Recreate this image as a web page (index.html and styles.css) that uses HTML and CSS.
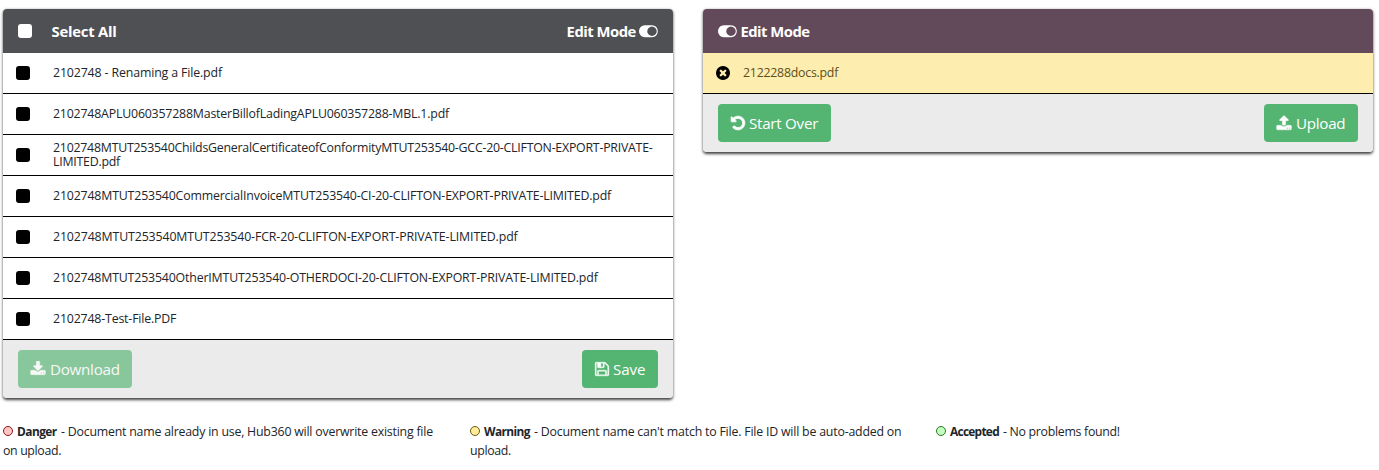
FILE: index.html
```
<!DOCTYPE html>
<html lang="en">
<head>
<meta charset="utf-8">
<title>Documents</title>
<link rel="stylesheet" href="styles.css">
</head>
<body>
<svg class="sprite" aria-hidden="true">
  <symbol id="toggle" viewBox="0 0 2048 1792"><path d="M0 896q0-130 51-248.500t136.500-204 204-136.500 248.500-51h768q130 0 248.500 51t204 136.500 136.500 204 51 248.500-51 248.500-136.500 204-204 136.500-248.500 51h-768q-130 0-248.500-51t-204-136.500-136.500-204-51-248.500zm1408 512q104 0 198.500-40.500t163.500-109.500 109.500-163.500 40.500-198.500-40.500-198.500-109.500-163.500-163.500-109.500-198.500-40.500-198.500 40.500-163.500 109.500-109.500 163.500-40.500 198.500 40.500 198.500 109.500 163.500 163.500 109.500 198.500 40.500z"/></symbol>
  <symbol id="download" viewBox="0 0 1792 1792"><path d="M1344 1344q0-26-19-45t-45-19-45 19-19 45 19 45 45 19 45-19 19-45zm256 0q0-26-19-45t-45-19-45 19-19 45 19 45 45 19 45-19 19-45zm128-224v320q0 40-28 68t-68 28h-1472q-40 0-68-28t-28-68v-320q0-40 28-68t68-28h465l135 136q58 56 136 56t136-56l136-136h464q40 0 68 28t28 68zm-325-569q17 41-14 70l-448 448q-18 19-45 19t-45-19l-448-448q-31-29-14-70 17-39 59-39h256v-448q0-26 19-45t45-19h256q26 0 45 19t19 45v448h256q42 0 59 39z"/></symbol>
  <symbol id="upload" viewBox="0 0 1792 1792"><path d="M1344 1472q0-26-19-45t-45-19-45 19-19 45 19 45 45 19 45-19 19-45zm256 0q0-26-19-45t-45-19-45 19-19 45 19 45 45 19 45-19 19-45zm128-224v320q0 40-28 68t-68 28h-1472q-40 0-68-28t-28-68v-320q0-40 28-68t68-28h427q21 56 70.500 92t110.500 36h256q61 0 110.500-36t70.500-92h427q40 0 68 28t28 68zm-325-648q-17 40-59 40h-256v448q0 26-19 45t-45 19h-256q-26 0-45-19t-19-45v-448h-256q-42 0-59-40-17-39 14-69l448-448q18-19 45-19t45 19l448 448q31 30 14 69z"/></symbol>
  <symbol id="undo" viewBox="0 0 1792 1792"><path d="M1664 896q0 156-61 298t-164 245-245 164-298 61q-172 0-327-72.500t-264-204.500q-7-10-6.500-22.500t8.500-20.500l137-138q10-9 25-9 16 2 23 12 73 95 179 147t225 52q104 0 198.500-40.500t163.500-109.500 109.500-163.500 40.500-198.500-40.500-198.500-109.500-163.500-163.500-109.500-198.500-40.500q-98 0-188 35.500t-160 101.500l137 138q31 30 14 69-17 40-59 40h-448q-26 0-45-19t-19-45v-448q0-42 40-59 39-17 69 14l130 129q107-101 244.500-156.500t284.500-55.500q156 0 298 61t245 164 164 245 61 298z"/></symbol>
  <symbol id="save" viewBox="0 0 1792 1792"><path d="M512 1536h768v-384h-768v384zm896 0h128v-896q0-14-10-38.500t-20-34.500l-281-281q-10-10-34-20t-39-10v416q0 40-28 68t-68 28h-576q-40 0-68-28t-28-68v-416h-128v1280h128v-416q0-40 28-68t68-28h832q40 0 68 28t28 68v416zm-384-928v-320q0-13-9.500-22.500t-22.500-9.500h-192q-13 0-22.500 9.500t-9.500 22.500v320q0 13 9.500 22.500t22.500 9.500h192q13 0 22.500-9.500t9.500-22.500zm640 32v928q0 40-28 68t-68 28h-1344q-40 0-68-28t-28-68v-1344q0-40 28-68t68-28h928q40 0 88 20t76 48l280 280q28 28 48 76t20 88z"/></symbol>
  <symbol id="remove" viewBox="128 128 1536 1536"><path d="M1277 1122q0-26-19-45l-181-181 181-181q19-19 19-45 0-27-19-46l-90-90q-19-19-46-19-26 0-45 19l-181 181-181-181q-19-19-45-19-27 0-46 19l-90 90q-19 19-19 46 0 26 19 45l181 181-181 181q-19 19-19 45 0 27 19 46l90 90q19 19 46 19 26 0 45-19l181-181 181 181q19 19 45 19 27 0 46-19l90-90q19-19 19-46zm387-226q0 209-103 385.500t-279.500 279.500-385.500 103-385.500-103-279.500-279.500-103-385.500 103-385.500 279.500-279.500 385.500-103 385.500 103 279.500 279.500 103 385.500z"/></symbol>
</svg>

<main class="panels">
  <section class="panel">
    <header class="head">
      <span class="box box-all"></span><span class="select-all">Select All</span>
      <span class="mode">Edit Mode</span><svg class="toggle"><use href="#toggle"/></svg>
    </header>
    <ul class="files">
      <li class="file"><span class="box"></span><span class="name">2102748 - Renaming a File.pdf</span></li>
      <li class="file"><span class="box"></span><span class="name">2102748APLU060357288MasterBillofLadingAPLU060357288-MBL.1.pdf</span></li>
      <li class="file"><span class="box"></span><span class="name">2102748MTUT253540ChildsGeneralCertificateofConformityMTUT253540-GCC-20-CLIFTON-EXPORT-PRIVATE-<br>LIMITED.pdf</span></li>
      <li class="file"><span class="box"></span><span class="name">2102748MTUT253540CommercialInvoiceMTUT253540-CI-20-CLIFTON-EXPORT-PRIVATE-LIMITED.pdf</span></li>
      <li class="file"><span class="box"></span><span class="name">2102748MTUT253540MTUT253540-FCR-20-CLIFTON-EXPORT-PRIVATE-LIMITED.pdf</span></li>
      <li class="file"><span class="box"></span><span class="name">2102748MTUT253540OtherIMTUT253540-OTHERDOCI-20-CLIFTON-EXPORT-PRIVATE-LIMITED.pdf</span></li>
      <li class="file"><span class="box"></span><span class="name">2102748-Test-File.PDF</span></li>
    </ul>
    <footer class="foot">
      <button class="btn btn-download" disabled><svg class="ico"><use href="#download"/></svg><span>Download</span></button>
      <button class="btn btn-save"><svg class="ico ico-save"><use href="#save"/></svg><span>Save</span></button>
    </footer>
  </section>

  <section class="panel">
    <header class="head head-plum">
      <svg class="toggle"><use href="#toggle"/></svg><span class="mode">Edit Mode</span>
    </header>
    <ul class="files">
      <li class="file file-warning"><svg class="remove"><use href="#remove"/></svg><span class="name">2122288docs.pdf</span></li>
    </ul>
    <footer class="foot">
      <button class="btn btn-restart"><svg class="ico ico-undo"><use href="#undo"/></svg><span>Start Over</span></button>
      <button class="btn btn-upload"><svg class="ico"><use href="#upload"/></svg><span>Upload</span></button>
    </footer>
  </section>
</main>

<div class="legend">
  <p class="note"><i class="dot danger"></i><b class="b-danger">Danger</b><span class="t-danger">- Document name already in use, Hub360 will overwrite existing file</span><br><span class="rest">on upload.</span></p>
  <p class="note"><i class="dot warning"></i><b class="b-warning">Warning</b><span class="t-warning">- Document name can't match to File. File ID will be auto-added on</span><br><span class="rest">upload.</span></p>
  <p class="note"><i class="dot accepted"></i><b class="b-accepted">Accepted</b><span class="t-accepted">- No problems found!</span></p>
</div>
</body>
</html>
```
FILE: styles.css
```
* { box-sizing: border-box; }
body {
  margin: 0;
  padding: 9px 6px 0 3px;
  background: #fff;
  color: #212529;
  font-family: "Open Sans", "Noto Sans", sans-serif;
  font-size: 12.35px;
}
.sprite { display: none; }
svg { fill: currentColor; flex: none; }

.panels { display: flex; gap: 30px; align-items: flex-start; }
.panel {
  width: 670px;
  border-radius: 4px;
  overflow: hidden;
  box-shadow: 0 1.5px 3px rgba(0, 0, 0, .75);
}
.head {
  display: flex;
  align-items: center;
  height: 44px;
  padding: 0 15px;
  background: #4f5054;
  color: #fff;
  font-size: 14.8px;
  font-weight: 700;
  line-height: 20px;
}
.head-plum { background: #624a5b; }
.select-all { margin: 0 auto 0 19.500px; letter-spacing: -.22px; }
.mode { width: 70px; white-space: nowrap; letter-spacing: -.5px; }
.toggle { width: 18.9px; height: 16.500px; margin-left: 2.500px; }
.head-plum .toggle { margin: 0 3.500px 0 0; }

.box {
  flex: none;
  width: 14px;
  height: 14px;
  border-radius: 3px;
  background: #000;
}
.box-all { background: #fff; }
.files { margin: 0; padding: 0; list-style: none; }
.file {
  display: flex;
  align-items: center;
  height: 41px;
  padding: 0 0 0 13px;
  border-bottom: 1px solid #000;
  line-height: 14px;
  white-space: nowrap;
}
.name { margin-left: 23px; letter-spacing: -.17px; }
.file:nth-child(1) .name { letter-spacing: -.135px; }
.file:nth-child(2) .name { letter-spacing: -.188px; }
.file:nth-child(3) .name { letter-spacing: -.235px; }
.file:nth-child(4) .name { letter-spacing: -.168px; }
.file:nth-child(5) .name { letter-spacing: -.125px; }
.file:nth-child(6) .name { letter-spacing: -.168px; }
.file-warning { background: #fdeeb0; color: #5d4f1a; }
.file-warning:nth-child(1) .name { margin-left: 13px; letter-spacing: -.24px; }
.remove { width: 14px; height: 14px; color: #000; }

.foot {
  display: flex;
  justify-content: space-between;
  padding: 10px 15px;
  background: #ebebeb;
}
.btn {
  display: flex;
  align-items: center;
  height: 38px;
  padding: 0 0 0 12px;
  border: 0;
  border-radius: 4px;
  background: #54b472;
  color: #fff;
  font-family: inherit;
  font-size: 15.2px;
  letter-spacing: -.28px;
  white-space: nowrap;
}
.btn:disabled { opacity: .65; }
.ico {
  width: 16px;
  height: 16px;
  margin-right: 4px;
  stroke: currentColor;
  stroke-width: 40px;
}
.ico-save { margin-right: 3px; }
.ico-undo { margin-right: 3px; stroke-width: 90px; }
.btn-download { width: 114px; }
.btn-save { width: 76px; letter-spacing: -.1px; }
.btn-restart { width: 113px; }
.btn-upload { width: 94px; }

.legend {
  display: grid;
  grid-template-columns: 467px 466px 1fr;
  margin-top: 24px;
}
.note { margin: 0; line-height: 19px; white-space: nowrap; }
.note b { display: inline-block; margin: 0 5px 0 4px; font-size: 11.9px; }
.dot {
  display: inline-block;
  width: 10px;
  height: 10px;
  border: 1.500px solid;
  border-radius: 50%;
}
.danger { border-color: #8b1a1a; background: #ffc4c4; }
.warning { border-color: #6b5c10; background: #fdeb9a; }
.accepted { border-color: #2c7a1e; background: #c5fcc0; }
.b-danger { width: 39px; letter-spacing: -.55px; }
.b-warning { width: 45px; letter-spacing: -.6px; }
.b-accepted { width: 48px; letter-spacing: -.72px; }
.t-danger { letter-spacing: -.215px; }
.t-warning { letter-spacing: -.2px; }
.t-accepted { letter-spacing: -.3px; }
.rest { letter-spacing: -.35px; }
```
